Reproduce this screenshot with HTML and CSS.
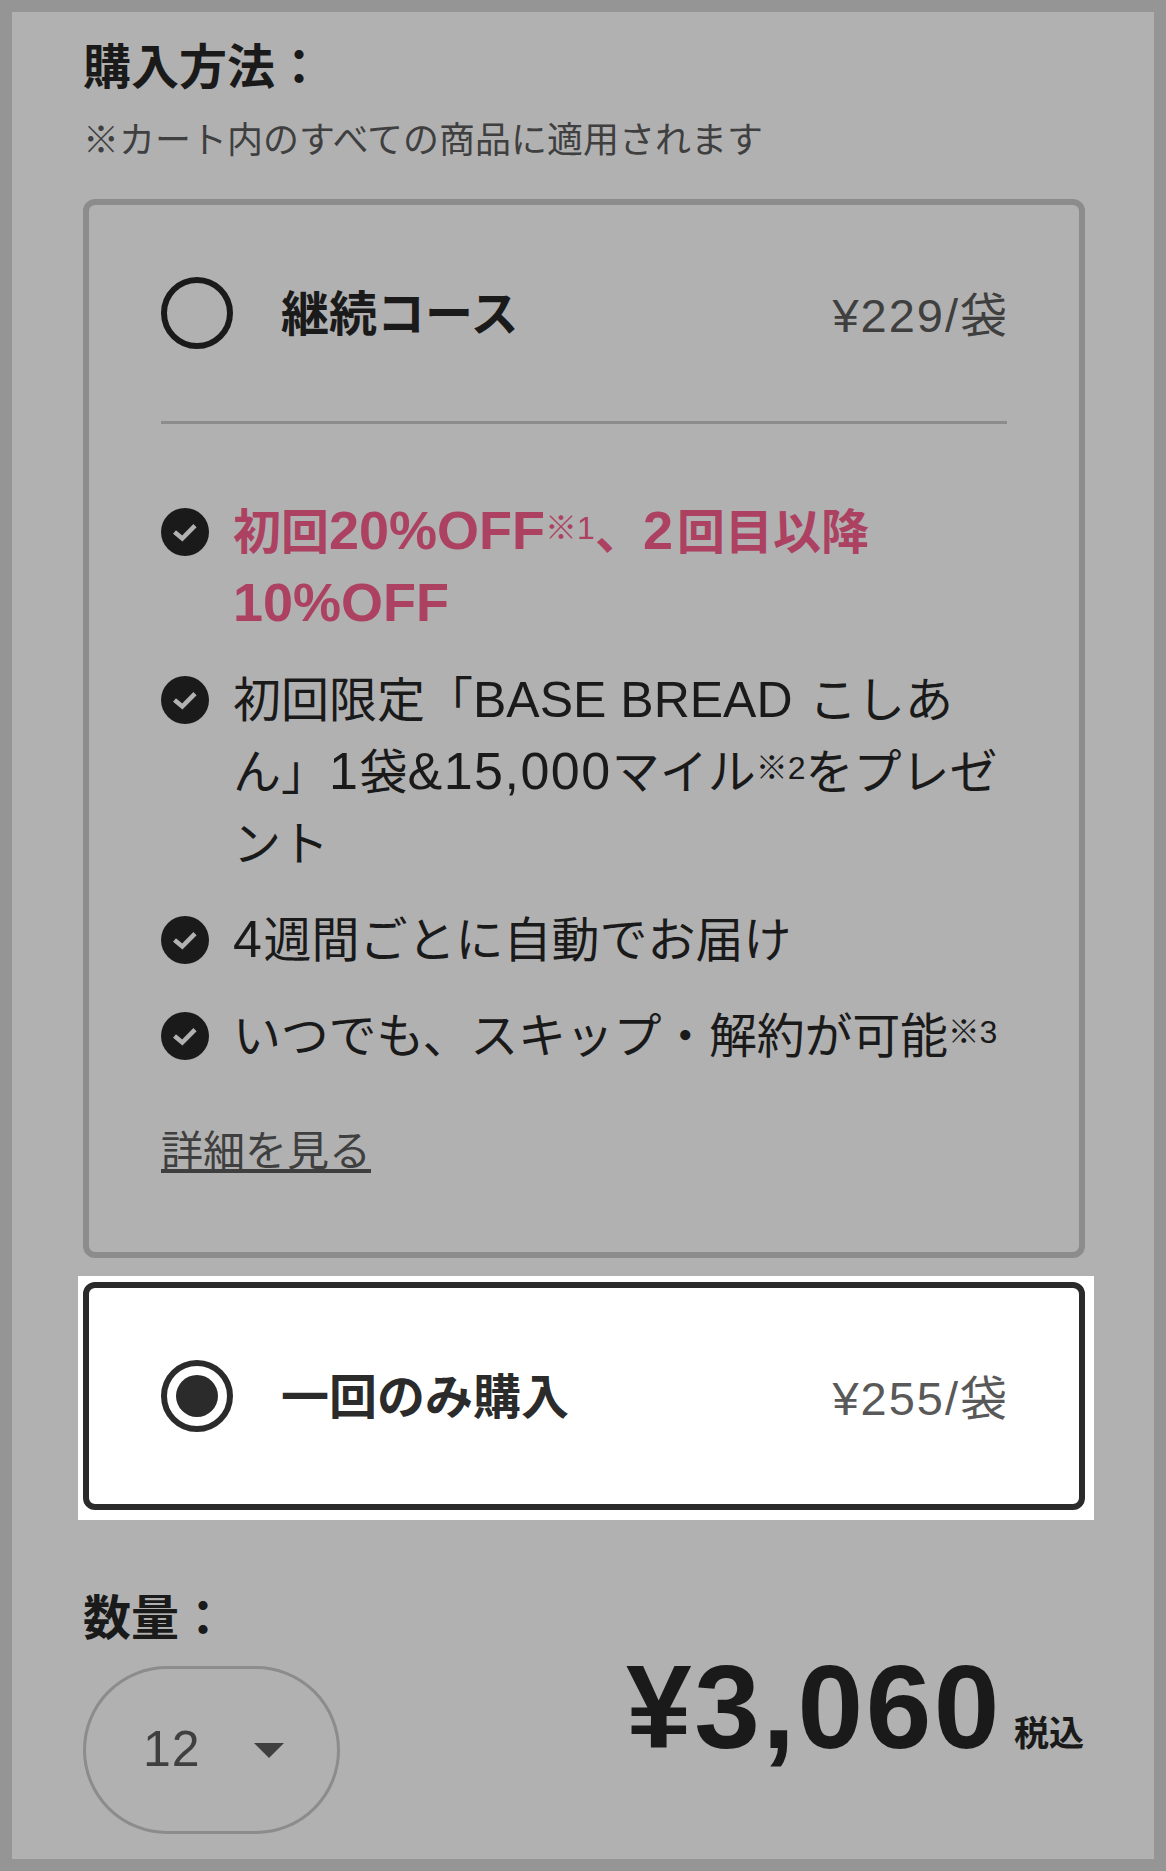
FILE: index.html
```html
<!DOCTYPE html>
<html lang="ja">

<head>
    <meta charset="UTF-8">
    <meta name="viewport" content="width=device-width, initial-scale=1.0">
    <title>購入方法</title>
    <link rel="stylesheet" href="styles.css">
</head>

<body>
    <div class="panel">
        <div class="heading">購入方法：</div>
        <div class="note">※カート内のすべての商品に適用されます</div>

        <div class="plan">
            <div class="plan-head">
                <span class="radio"></span>
                <span class="plan-name">継続コース</span>
                <span class="plan-price">¥229/袋</span>
            </div>
            <hr class="rule">
            <ul class="perks">
                <li class="perk perk-hot">
                    <svg class="check" viewBox="0 0 48 48"><circle cx="24" cy="24" r="24" fill="#1a1a1a"/><path d="M13.5 24 21.3 30.5 34 17.7" fill="none" stroke="#b1b1b1" stroke-width="4.6"/></svg>
                    <span class="perk-text">初回<b>20%OFF</b><sup>※1</sup>、<b>2</b>回目以降<b>10%OFF</b></span>
                </li>
                <li class="perk">
                    <svg class="check" viewBox="0 0 48 48"><circle cx="24" cy="24" r="24" fill="#1a1a1a"/><path d="M13.5 24 21.3 30.5 34 17.7" fill="none" stroke="#b1b1b1" stroke-width="4.6"/></svg>
                    <span class="perk-text">初回限定「<i>BASE BREAD</i> こしあん」<em>1</em>袋<em>&amp;15,000</em>マイル<sup>※2</sup>をプレゼント</span>
                </li>
                <li class="perk">
                    <svg class="check" viewBox="0 0 48 48"><circle cx="24" cy="24" r="24" fill="#1a1a1a"/><path d="M13.5 24 21.3 30.5 34 17.7" fill="none" stroke="#b1b1b1" stroke-width="4.6"/></svg>
                    <span class="perk-text"><em>4</em>週間ごとに自動でお届け</span>
                </li>
                <li class="perk">
                    <svg class="check" viewBox="0 0 48 48"><circle cx="24" cy="24" r="24" fill="#1a1a1a"/><path d="M13.5 24 21.3 30.5 34 17.7" fill="none" stroke="#b1b1b1" stroke-width="4.6"/></svg>
                    <span class="perk-text">いつでも、スキップ・解約が可能<sup>※3</sup></span>
                </li>
            </ul>
            <a class="more" href="#">詳細を見る</a>
        </div>

        <div class="spot">
            <div class="plan plan-on">
                <div class="plan-head">
                    <span class="radio radio-on"></span>
                    <span class="plan-name">一回のみ購入</span>
                    <span class="plan-price">¥255/袋</span>
                </div>
            </div>
        </div>

        <div class="order">
            <div>
                <div class="heading">数量：</div>
                <div class="qty">
                    <span class="qty-num">12</span>
                    <span class="caret"></span>
                </div>
            </div>
            <div class="total">¥3,060<small>税込</small></div>
        </div>
    </div>
</body>

</html>
```

FILE: styles.css
```css
* {
    box-sizing: border-box;
}

body {
    margin: 0;
    padding: 12px;
    height: 1871px;
    background: #959595;
    color: #1a1a1a;
    font-family: "Liberation Sans", "Noto Sans CJK JP", sans-serif;
}

.panel {
    height: 1847px;
    padding: 20px 69px 0 71px;
    background: #b1b1b1;
}

.heading {
    font-size: 48px;
    line-height: 72px;
    font-weight: bold;
}

.note {
    margin: 10px 0 31px;
    font-size: 36px;
    line-height: 54px;
    color: #3f3f3f;
}

.plan {
    border: 6px solid #8c8c8c;
    border-radius: 12px;
    padding: 72px;
}

.plan-head {
    display: flex;
    align-items: center;
    height: 72px;
}

.radio {
    flex: none;
    width: 72px;
    height: 72px;
    margin-right: 48px;
    border: 6px solid #1a1a1a;
    border-radius: 50%;
}

.plan-name {
    margin-bottom: 7px;
    font-size: 48px;
    font-weight: bold;
}

.plan-price {
    margin: 0 -2px 4px auto;
    font-size: 47px;
    letter-spacing: 2px;
    color: #3f3f3f;
}

.rule {
    height: 3px;
    margin: 72px 0;
    border: 0;
    background: #8c8c8c;
}

.perks {
    margin: 0 0 50px;
    padding: 0;
    list-style: none;
}

.perk {
    display: flex;
    gap: 24px;
    margin-top: 24px;
    font-size: 48px;
    line-height: 72px;
}

.perk:first-child {
    margin-top: 0;
}

.perk:last-child .perk-text {
    letter-spacing: -0.25px;
}

.perk-text {
    margin: 1px 0 -1px;
}

.perk-hot {
    color: #ac4162;
    font-weight: bold;
}

/* latin runs are set larger than the kana around them */
.perk-text b {
    font-size: 54px;
    line-height: 0;
}

.perk-text sup + b {
    margin-right: 4px;
}

.perk-text em {
    font-size: 52px;
    font-style: normal;
    line-height: 0;
    letter-spacing: 1.5px;
}

.perk-text i {
    margin-right: 3px;
    font-size: 50px;
    font-style: normal;
    line-height: 0;
}

.perk sup {
    font-size: 32px;
    font-weight: normal;
    line-height: 0;
    vertical-align: 10px;
}

.check {
    flex: none;
    width: 48px;
    height: 48px;
    margin-top: 12px;
}

.more {
    display: block;
    width: fit-content;
    font-size: 42px;
    line-height: 60px;
    color: #3f3f3f;
}

.plan:not(.plan-on) {
    padding-bottom: 70px;
}

.spot {
    margin: 18px -9px 0 -5px;
    padding: 6px 9px 10px 5px;
    background: #fff;
}

.plan-on {
    border-color: #2b2b2b;
    color: #2b2b2b;
}

.plan-on .plan-price {
    color: #595959;
}

.radio-on {
    position: relative;
    border-color: #2b2b2b;
}

.radio-on::after {
    content: "";
    position: absolute;
    top: 9px;
    left: 9px;
    width: 42px;
    height: 42px;
    border-radius: 50%;
    background: #2b2b2b;
}

.order {
    display: flex;
    justify-content: space-between;
    margin-top: 63px;
}

.qty {
    display: flex;
    align-items: center;
    gap: 53px;
    width: 257px;
    height: 168px;
    margin-top: 11px;
    padding-left: 57px;
    border: 3px solid #8c8c8c;
    border-radius: 84px;
    font-size: 50px;
    color: #3f3f3f;
}

.qty-num {
    margin-bottom: 2px;
    letter-spacing: 1px;
}

.caret {
    width: 0;
    height: 0;
    border-top: 15px solid #3f3f3f;
    border-left: 15px solid transparent;
    border-right: 15px solid transparent;
}

.total {
    margin: 64px 1px 0 0;
    font-size: 118px;
    line-height: 120px;
    font-weight: bold;
    letter-spacing: 2.5px;
}

.total small {
    margin-left: 12px;
    font-size: 35px;
    letter-spacing: 0;
    vertical-align: 2px;
}
```
